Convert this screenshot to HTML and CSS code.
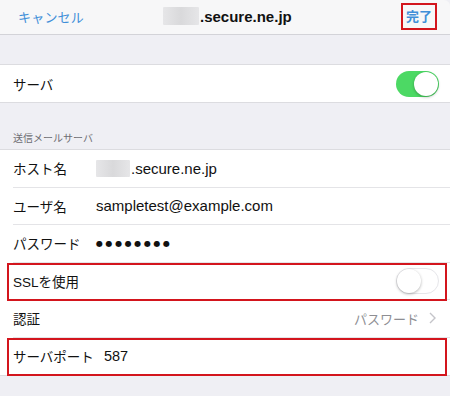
FILE: index.html
```html
<!DOCTYPE html>
<html lang="ja">
<head>
<meta charset="utf-8">
<title>送信メールサーバ</title>
<link rel="stylesheet" href="styles.css">
</head>
<body>
<div class="sheet">
  <header class="nav">
    <span class="nav-cancel">キャンセル</span>
    <span class="nav-title"><span class="blur blur-title"></span>.secure.ne.jp</span>
    <span class="nav-done hl-box">完了</span>
  </header>

  <div class="gap-top"></div>
  <section class="group">
    <div class="row">
      <div class="inner">
        <span class="label">サーバ</span>
        <span class="toggle on"><span class="knob"></span></span>
      </div>
    </div>
  </section>

  <div class="section-head">送信メールサーバ</div>
  <section class="group">
    <div class="row">
      <div class="inner">
        <span class="label w">ホスト名</span>
        <span class="value"><span class="blur blur-host"></span>.secure.ne.jp</span>
      </div>
    </div>
    <div class="row">
      <div class="inner">
        <span class="label w">ユーザ名</span>
        <span class="value">sampletest@example.com</span>
      </div>
    </div>
    <div class="row">
      <div class="inner">
        <span class="label w">パスワード</span>
        <span class="value dots">●●●●●●●●</span>
      </div>
    </div>
    <div class="row hl">
      <div class="inner">
        <span class="label">SSLを使用</span>
        <span class="toggle off"><span class="knob"></span></span>
      </div>
    </div>
    <div class="row">
      <div class="inner">
        <span class="label">認証</span>
        <span class="detail">パスワード<svg class="chev" width="7" height="12" viewBox="0 0 7 12"><polyline points="1,1 6,6 1,11" fill="none" stroke="#c4c4c9" stroke-width="1.4"/></svg></span>
      </div>
    </div>
    <div class="row hl last">
      <div class="inner">
        <span class="label">サーバポート</span>
        <span class="value port">587</span>
      </div>
    </div>
  </section>
</div>
</body>
</html>
```

FILE: styles.css
```css
* { box-sizing: border-box; }
html, body { margin: 0; padding: 0; }
body {
  background: #efeff4;
  font-family: "Liberation Sans", "Noto Sans CJK JP", sans-serif;
  color: #111;
  width: 450px;
  height: 396px;
  overflow: hidden;
}
.sheet { width: 450px; }

.nav {
  height: 35px;
  background: #f7f7f8;
  border-bottom: 1px solid #d3d3d8;
  border-top-right-radius: 6px;
  display: flex;
  align-items: center;
  position: relative;
  padding: 0 13px 1px 18px;
}
.nav-cancel {
  font-size: 13px;
  color: #3f8fd8;
  letter-spacing: 0.2px;
}
.nav-title {
  position: absolute;
  left: 163px;
  top: 7px;
  display: flex;
  align-items: center;
  font-size: 15px;
  font-weight: bold;
  color: #111;
  height: 18px;
}
.nav-done {
  margin-left: auto;
  font-size: 13px;
  font-weight: bold;
  color: #3f8fd8;
  padding: 4px 3px 3px;
  border: 2px solid #d3151d;
  line-height: 16px;
}

.blur {
  display: inline-block;
  background: linear-gradient(90deg, #e6e6e8 0%, #d9d9db 50%, #e6e6e8 100%);
  border-radius: 1px;
}
.blur-title { width: 36px; height: 18px; margin-right: 1px; }
.blur-host { width: 34px; height: 17px; margin-right: 1px; }

.gap-top { height: 29px; }

.group {
  background: #fff;
  border-top: 1px solid #dcdce0;
  border-bottom: 1px solid #dcdce0;
}

.row {
  height: 37px;
  padding-left: 13px;
  position: relative;
}
.group + .section-head + .group .row { height: 37.5px; }
.inner {
  height: 100%;
  display: flex;
  align-items: center;
  padding-right: 12px;
  border-bottom: 1px solid #e4e4e7;
}
.row.last .inner, .group > .row:only-child .inner { border-bottom: none; }

.label {
  font-size: 13.5px;
  color: #111;
}
.label.w { width: 83px; flex: none; }

.value {
  font-size: 15px;
  color: #111;
  display: flex;
  align-items: center;
}
.value.port { margin-left: 10px; font-size: 14.5px; }
.dots {
  font-family: "DejaVu Sans", sans-serif;
  font-size: 8px;
  letter-spacing: 2.6px;
}

.detail {
  margin-left: auto;
  font-size: 13px;
  color: #8e8e93;
  display: flex;
  align-items: center;
}
.chev { margin-left: 10px; margin-right: 2px; }

.toggle {
  margin-left: auto;
  width: 43px;
  height: 26px;
  border-radius: 13px;
  position: relative;
  flex: none;
}
.toggle.on { background: #4cd964; margin-right: -1px; }
.toggle.off { background: #fff; border: 1.5px solid #e6e6ea; margin-right: -1px; }
.knob {
  position: absolute;
  width: 24px;
  height: 24px;
  border-radius: 50%;
  background: #fff;
  box-shadow: 0 1px 3px rgba(0,0,0,0.3);
}
.toggle.on .knob { right: 1px; top: 1px; }
.toggle.off .knob { left: 0; top: 0; }

.section-head {
  height: 46px;
  padding: 27px 0 0 13px;
  font-size: 10px;
  color: #6d6d72;
}

.hl::after {
  content: "";
  position: absolute;
  left: 7px;
  right: 3px;
  top: 0;
  bottom: -1px;
  border: 2px solid #d3151d;
  pointer-events: none;
}
```
